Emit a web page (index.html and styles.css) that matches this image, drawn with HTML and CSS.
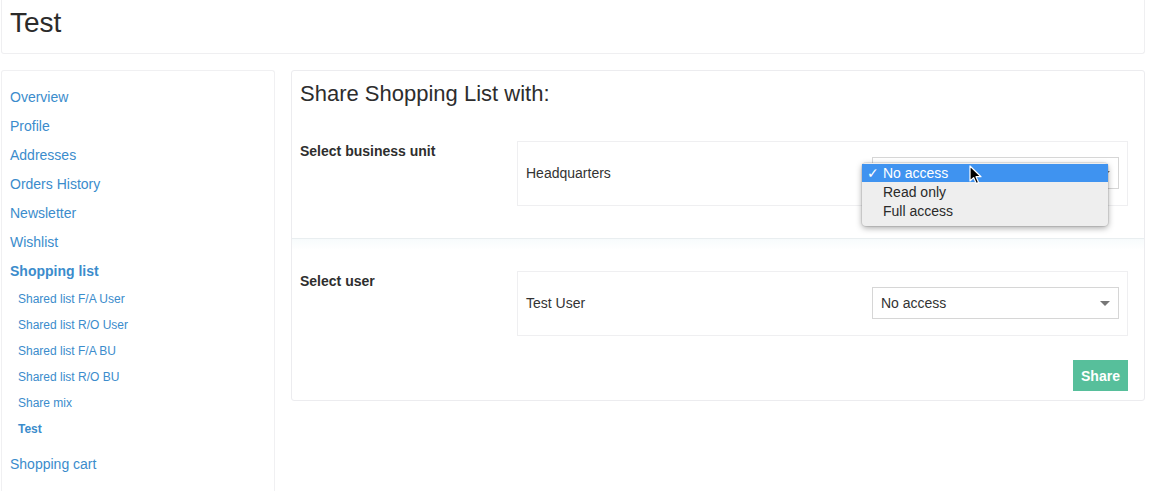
FILE: index.html
```html
<!DOCTYPE html>
<html>
<head>
<meta charset="utf-8">
<link rel="stylesheet" href="styles.css">
</head>
<body>
<div class="page">
  <header class="header"><h1 class="page-title">Test</h1></header>
  <div class="content">
    <nav class="sidebar">
      <a class="nav-link" href="#">Overview</a>
      <a class="nav-link" href="#">Profile</a>
      <a class="nav-link" href="#">Addresses</a>
      <a class="nav-link" href="#">Orders History</a>
      <a class="nav-link" href="#">Newsletter</a>
      <a class="nav-link" href="#">Wishlist</a>
      <a class="nav-link active" href="#">Shopping list</a>
      <div class="subnav">
        <a class="sub-link" href="#">Shared list F/A User</a>
        <a class="sub-link" href="#">Shared list R/O User</a>
        <a class="sub-link" href="#">Shared list F/A BU</a>
        <a class="sub-link" href="#">Shared list R/O BU</a>
        <a class="sub-link" href="#">Share mix</a>
        <a class="sub-link active" href="#">Test</a>
      </div>
      <a class="nav-link cart" href="#">Shopping cart</a>
    </nav>
    <main class="panel">
      <h2 class="panel-title">Share Shopping List with:</h2>
      <div class="form-row first">
        <div class="row-label">Select business unit</div>
        <div class="row-box">
          <span class="entity">Headquarters</span>
          <div class="select-wrap">
            <div class="select"><span>No access</span><span class="caret"></span></div>
            <div class="menu">
              <div class="menu-item selected"><span class="check">✓</span>No access</div>
              <div class="menu-item">Read only</div>
              <div class="menu-item">Full access</div>
            </div>
            <svg class="cursor" width="14" height="22" viewBox="0 0 14 22">
              <path d="M1 1 L1 16 L4.6 12.6 L7.2 18.6 L9.6 17.6 L7 11.7 L12 11.7 Z" fill="#000" stroke="#fff" stroke-width="1.2" stroke-linejoin="round"/>
            </svg>
          </div>
        </div>
      </div>
      <div class="separator"></div>
      <div class="form-row">
        <div class="row-label">Select user</div>
        <div class="row-box">
          <span class="entity">Test User</span>
          <div class="select-wrap">
            <div class="select"><span>No access</span><span class="caret"></span></div>
          </div>
        </div>
      </div>
      <div class="actions"><button class="btn-share">Share</button></div>
    </main>
  </div>
</div>
</body>
</html>
```
FILE: styles.css
```css
* { box-sizing: border-box; }
body {
  margin: 0;
  background: #fff;
  font-family: "Liberation Sans", Arial, sans-serif;
  color: #333;
}
.page {
  padding: 0 12px 0 1px;
}
.header {
  height: 54px;
  border: 1px solid #efeff1;
  border-top: none;
  border-radius: 0 0 3px 3px;
  padding: 6px 0 0 8px;
}
.page-title {
  margin: 0;
  font-size: 28px;
  font-weight: normal;
  line-height: 34px;
  color: #2b2b2b;
}
.content {
  display: flex;
  gap: 16px;
  margin-top: 16px;
  align-items: flex-start;
}
.sidebar {
  width: 274px;
  height: 440px;
  border: 1px solid #f0f0f2;
  border-bottom: none;
  border-radius: 3px 3px 0 0;
  padding: 12px 0 0 8px;
  display: flex;
  flex-direction: column;
}
.nav-link, .sub-link {
  color: #3b8ccc;
  text-decoration: none;
  display: block;
}
.nav-link {
  font-size: 14px;
  line-height: 29px;
}
.nav-link.active { font-weight: bold; }
.subnav {
  display: flex;
  flex-direction: column;
  padding-left: 8px;
}
.sub-link {
  font-size: 12px;
  line-height: 26px;
}
.sub-link.active { font-weight: bold; }
.nav-link.cart { margin-top: 8px; }
.panel {
  flex: 1;
  height: 331px;
  border: 1px solid #ececef;
  border-radius: 3px;
  padding: 11px 16px 0 8px;
}
.panel-title {
  margin: 0;
  font-size: 22px;
  font-weight: normal;
  line-height: 24px;
  color: #2d2d2d;
}
.form-row {
  display: flex;
}
.form-row.first { margin-top: 35px; }
.row-label {
  width: 217px;
  font-size: 14px;
  font-weight: bold;
  line-height: 20px;
  padding-top: 0;
  color: #2e2e2e;
}
.row-box {
  flex: 1;
  height: 65px;
  border: 1px solid #efeff1;
  display: flex;
  align-items: center;
  justify-content: space-between;
  padding: 0 8px 1px 8px;
  font-size: 14px;
  color: #333;
}
.entity { line-height: 18px; }
.select-wrap { position: relative; }
.select {
  width: 247px;
  height: 32px;
  border: 1px solid #d6d6d6;
  background: #fff;
  display: flex;
  align-items: center;
  justify-content: space-between;
  padding: 0 8px 0 8px;
  font-size: 14px;
  color: #333;
}
.caret {
  width: 0; height: 0;
  border-left: 5px solid transparent;
  border-right: 5px solid transparent;
  border-top: 5px solid #777;
}
.menu {
  position: absolute;
  left: -10px;
  top: 6px;
  width: 246px;
  padding: 1px 0 5px;
  background: #eeeeee;
  border-radius: 4px;
  box-shadow: 0 2px 6px rgba(0,0,0,0.35), 0 0 0 1px rgba(0,0,0,0.08);
  font-family: "Liberation Sans", Arial, sans-serif;
  font-size: 14px;
}
.menu-item {
  height: 19px;
  line-height: 19px;
  padding-left: 21px;
  color: #2a2a2a;
  position: relative;
}
.menu-item.selected {
  background: #3f93f0;
  color: #fff;
  height: 18px;
  line-height: 18px;
  margin-bottom: 1px;
}
.check {
  position: absolute;
  left: 5px;
  top: 0;
  font-size: 14px;
  font-weight: bold;
  font-family: "DejaVu Sans", sans-serif;
}
.cursor {
  position: absolute;
  left: 97px;
  top: 8px;
}
.separator {
  height: 12px;
  margin: 32px -16px 21px -8px;
  border-top: 1px solid #e9eef0;
  background: linear-gradient(#f7fbfc, #ffffff);
}
.actions {
  display: flex;
  justify-content: flex-end;
  margin-top: 24px;
}
.btn-share {
  width: 55px;
  height: 31px;
  border: none;
  background: #57bf9b;
  color: #fff;
  font-family: "Liberation Sans", Arial, sans-serif;
  font-size: 14px;
  font-weight: bold;
  padding: 0;
}
```
